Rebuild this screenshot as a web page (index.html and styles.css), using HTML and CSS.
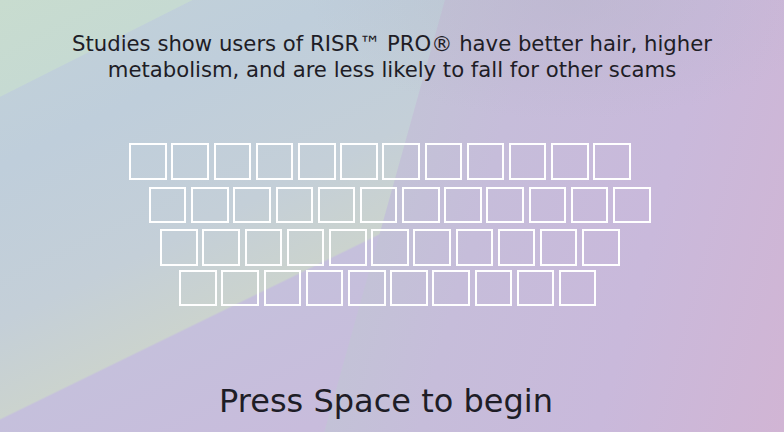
FILE: index.html
```html
<!DOCTYPE html>
<html>
<head>
<meta charset="utf-8">
<link rel="stylesheet" href="styles.css">
</head>
<body>
<div class="page">
  <p class="headline">Studies show users of RISR™ PRO® have better hair, higher<br>metabolism, and are less likely to fall for other scams</p>
  <div class="keyboard">
    <div class="row r1">
      <span class="key"></span><span class="key"></span><span class="key"></span><span class="key"></span><span class="key"></span><span class="key"></span><span class="key"></span><span class="key"></span><span class="key"></span><span class="key"></span><span class="key"></span><span class="key"></span>
    </div>
    <div class="row r2">
      <span class="key"></span><span class="key"></span><span class="key"></span><span class="key"></span><span class="key"></span><span class="key"></span><span class="key"></span><span class="key"></span><span class="key"></span><span class="key"></span><span class="key"></span><span class="key"></span>
    </div>
    <div class="row r3">
      <span class="key"></span><span class="key"></span><span class="key"></span><span class="key"></span><span class="key"></span><span class="key"></span><span class="key"></span><span class="key"></span><span class="key"></span><span class="key"></span><span class="key"></span>
    </div>
    <div class="row r4">
      <span class="key"></span><span class="key"></span><span class="key"></span><span class="key"></span><span class="key"></span><span class="key"></span><span class="key"></span><span class="key"></span><span class="key"></span><span class="key"></span>
    </div>
  </div>
  <p class="prompt">Press Space to begin</p>
</div>
</body>
</html>
```

FILE: styles.css
```css
html, body {
  margin: 0;
  padding: 0;
  width: 784px;
  height: 432px;
  overflow: hidden;
}

body {
  font-family: "DejaVu Sans", "Liberation Sans", sans-serif;
  color: #1e1d26;
  background:
    /* green wedge, top-left corner */
    linear-gradient(153.3deg, #c8dccf 0px, #c6dad2 86px, rgba(198, 218, 210, 0) 87px),
    /* soft grey haze, top middle-right */
    radial-gradient(260px 120px at 570px 0px, rgba(180, 180, 198, 0.4), rgba(180, 180, 198, 0)),
    /* right-hand region beyond the steep diagonal */
    linear-gradient(105.6deg, rgba(0, 0, 0, 0) 0px, rgba(0, 0, 0, 0) 428px, #c3c2d7 429px, #c6bdda 520px, #c9b9db 690px, #d1b5d4 871px),
    /* left region with lighter band that ends at the lower diagonal */
    linear-gradient(154deg, #c2d2d8 0px, #bfcedb 150px, #c4cfd8 290px, #cbd3ce 376px, #c5c0dc 378px, #c8bcdc 520px, #cfb8d8 738px);
}

.page {
  height: 432px;
  display: flex;
  flex-direction: column;
  align-items: center;
}

.headline {
  margin: 31px 0 0;
  font-size: 21.2px;
  line-height: 26px;
  text-align: center;
  font-weight: normal;
}

.keyboard {
  align-self: flex-start;
  margin: 60px 0 0 129.3px;
  display: flex;
  flex-direction: column;
}

.row {
  display: flex;
  gap: 4.7px;
}

.r2 { margin: 7px 0 0 19.7px; }
.r3 { margin: 6px 0 0 31px; }
.r4 { margin: 4px 0 0 50px; }

.key {
  display: block;
  width: 37.5px;
  height: 36.5px;
  box-sizing: border-box;
  border: 2px solid #ffffff;
}

.prompt {
  margin: auto 12px 12px 0;
  font-size: 32px;
  line-height: 38px;
  font-weight: normal;
  color: #1e1d26;
}
```
